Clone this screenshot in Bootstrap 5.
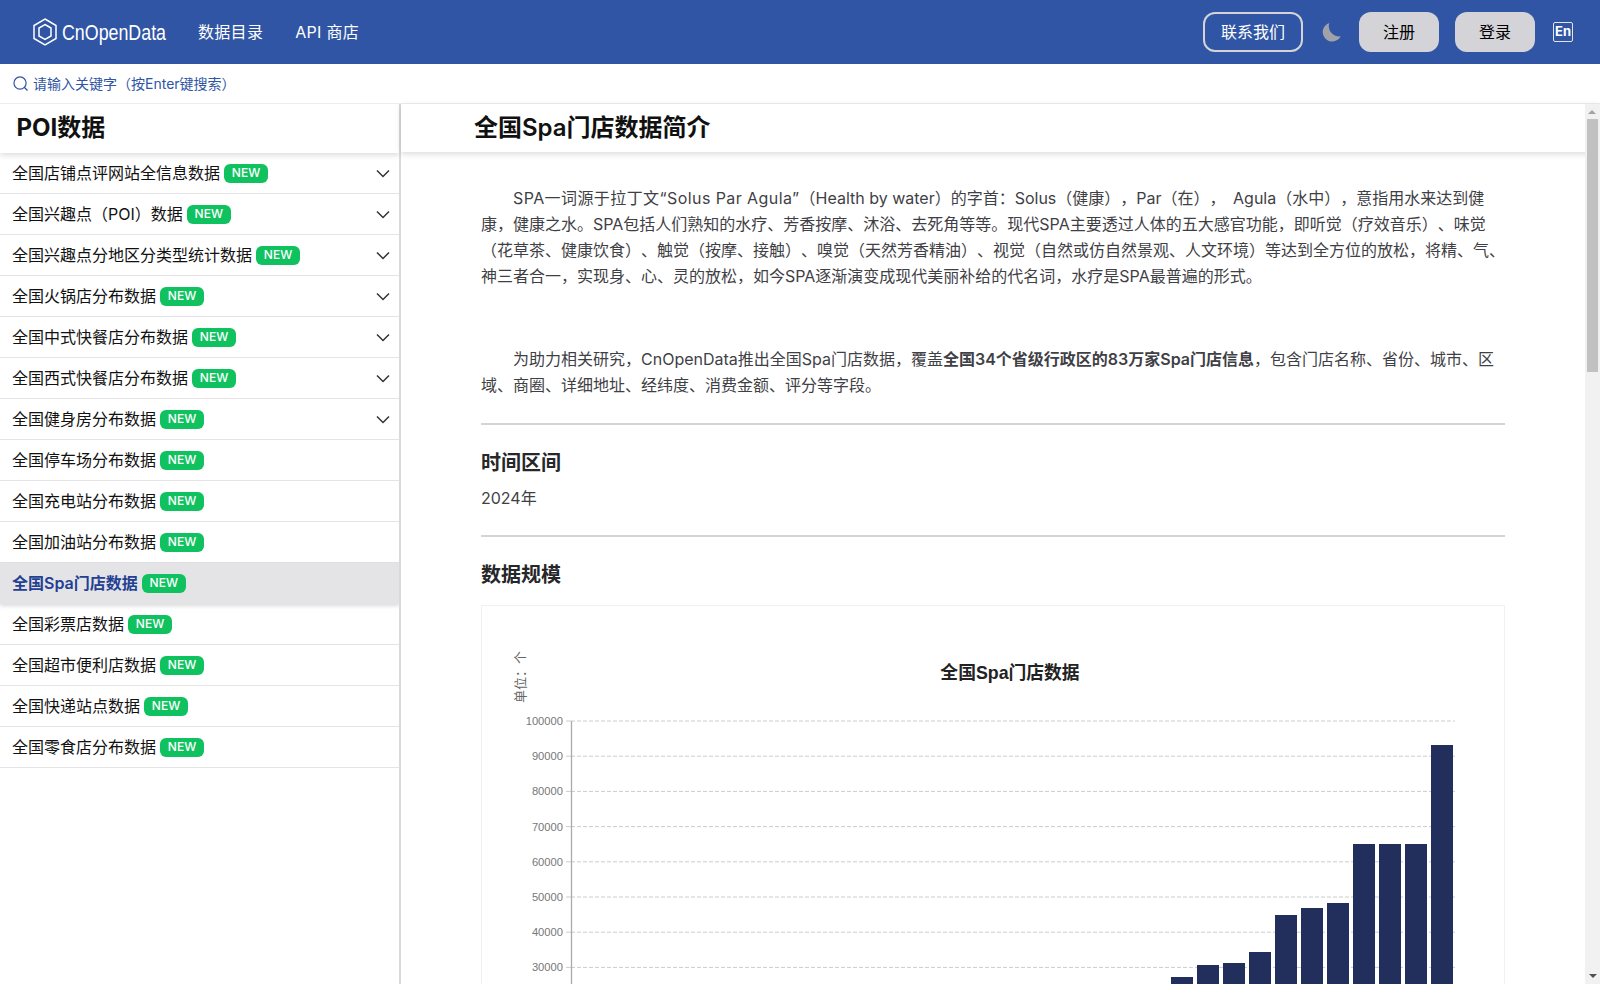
<!DOCTYPE html>
<html lang="zh">
<head>
    <meta charset="UTF-8">
    <meta name="viewport" content="width=device-width, initial-scale=1.0">
    <title>全国Spa门店数据 - CnOpenData</title>
    <link href="https://cdn.jsdelivr.net/npm/bootstrap@5.3.0/dist/css/bootstrap.min.css" rel="stylesheet">
    <style>
        html, body { height: 100%; overflow: hidden; }
        body {
            background: #fff;
            color: #111;
            font-family: Inter, "Noto Sans CJK SC", sans-serif;
            font-size: 16px;
            text-spacing-trim: space-all;
        }
        .page-wrap { height: 984px; display: flex; flex-direction: column; overflow: hidden; }

        .top-bar { background: #2f55a4; height: 64px; flex: none; padding: 0 27px 0 33px; }
        .brand-box { color: #fff; font-family: "Liberation Sans", sans-serif; font-size: 22px; text-decoration: none; width: 133px; gap: 5px; }
        .brand-text { display: inline-block; transform: scaleX(.81); transform-origin: left center; }
        .top-link { color: #fff; text-decoration: none; font-size: 16px; margin-left: 32px; letter-spacing: .3px; }
        .btn-contact { width: 100px; height: 40px; color: #fff; border: 2px solid #d4d4d8; border-radius: 12px; font-size: 16px; padding: 0; }
        .btn-contact:hover { color: #fff; }
        .moon-mark { margin: 0 18px 0 19px; }
        .btn-grey { width: 80px; height: 40px; background: #d4d4d8; color: #000; border: 0; border-radius: 12px; font-size: 16px; padding: 0; }
        .en-mark { width: 20px; height: 20px; margin-left: 18px; border: 1.5px solid #e4e4e7; border-radius: 2px; color: #fff; font-size: 13px; font-weight: 700; }

        .search-row { height: 40px; flex: none; padding-left: 13px; gap: 5px; color: #2f55a4; font-size: 14px; border-bottom: 1px solid #eee; }

        .main-row { flex: 1; min-height: 0; display: flex; }
        .side-pane { width: 401px; flex: none; border-right: 2px solid #d9d9d9; overflow: hidden; }
        .side-head { height: 49px; padding: 0 0 1px 16.5px; font-size: 24px; font-weight: 700; box-shadow: 0 2px 6px rgba(0,0,0,.15); position: relative; }
        .side-item { height: 41px; padding: 0 9px 0 12px; font-size: 16px; color: #111; border-bottom: 1px solid #e4e4e7; }
        .side-item.current { background: #e4e4e7; color: #234092; font-weight: 600; box-shadow: 0 2px 4px rgba(0,0,0,.15); position: relative; }
        .new-tag { background: #10c25f; color: #fff; font-size: 12px; font-weight: 500; border-radius: 6px; height: 19px; width: 44px; margin-left: 4px; }

        .content-pane { flex: 1; min-width: 0; display: flex; flex-direction: column; position: relative; }
        .content-head { height: 48px; flex: none; padding-left: 73px; font-size: 24px; font-weight: 600; box-shadow: 0 2px 6px rgba(0,0,0,.15); position: relative; z-index: 1; }
        .content-body { padding: 33px 95px 0 80px; overflow: hidden; flex: 1; }
        .intro-text { font-size: 16px; line-height: 26px; color: #3f3f46; text-indent: 2em; margin-bottom: 0; }
        .intro-text strong { font-weight: 600; }
        .intro-last { padding-bottom: 1px; }
        .wide-run { letter-spacing: .42px; }
        .wide-gap { word-spacing: 3px; }
        .blank-line { height: 57px; }
        .rule-line { border: 0; border-top: 2px solid #d4d4d8; opacity: 1; margin: 24px 0; }
        .sec-title { font-size: 20px; font-weight: 600; color: #27272a; margin: 0 0 9px; line-height: 28px; }
        .sec-value { font-size: 16px; color: #3f3f46; line-height: 25px; margin: 0; }
        .chart-box { border: 1px solid #f1f1f3; height: 600px; margin-top: 16px; }

        .scroll-track { position: absolute; top: 0; right: 0; bottom: 0; width: 15px; background: #f1f1f1; z-index: 2; }
        .scroll-thumb { position: absolute; top: 15px; left: 2px; width: 11px; height: 253px; background: #c1c1c1; }
        .scroll-up { position: absolute; top: 6px; left: 3px; border: 4px solid transparent; border-top: 0; border-bottom-color: #a3a3a3; }
        .scroll-down { position: absolute; bottom: 6px; left: 4px; border: 4px solid transparent; border-bottom: 0; border-top-color: #505050; }
    </style>
</head>
<body>
<div class="page-wrap">
    <nav class="top-bar d-flex align-items-center">
        <a class="brand-box d-flex align-items-center" href="#">
            <svg class="flex-shrink-0" width="24" height="28" viewBox="0 0 24 28" fill="none" stroke="#fff" stroke-width="1.5">
                <path d="M12 1 L23 7.5 V20.5 L12 27 L1 20.5 V7.5 Z"/>
                <path d="M12 6.5 L18 10 V18 L12 21.5 L6 18 V10 Z"/>
            </svg>
            <span class="brand-text">CnOpenData</span>
        </a>
        <a class="top-link" href="#">数据目录</a>
        <a class="top-link" href="#">API 商店</a>
        <div class="ms-auto d-flex align-items-center">
            <button class="btn btn-contact" type="button">联系我们</button>
            <svg class="moon-mark" width="19" height="19" viewBox="0 0 19 19" fill="#a1a1aa"><path d="M7.3 0 A9.5 9.5 0 1 0 18.7 13.3 A10.3 10.3 0 0 1 7.3 0 Z"/></svg>
            <button class="btn btn-grey" type="button">注册</button>
            <button class="btn btn-grey ms-3" type="button">登录</button>
            <span class="en-mark d-flex align-items-center justify-content-center">En</span>
        </div>
    </nav>

    <div class="search-row d-flex align-items-center">
        <svg width="15" height="15" viewBox="0 0 16 16" fill="none" stroke="#2f55a4" stroke-width="1.3"><circle cx="7.5" cy="7.5" r="6.5"/><path d="M12 12 L15.5 15.5"/></svg>
        <span>请输入关键字（按Enter键搜索）</span>
    </div>

    <div class="main-row">
        <aside class="side-pane" id="sideList">
            <div class="side-head d-flex align-items-center">POI数据</div>
        </aside>
        <main class="content-pane">
            <div class="content-head d-flex align-items-center">全国Spa门店数据简介</div>
            <div class="content-body">
                <p class="intro-text"><span class="wide-run">SPA一词源于拉丁文“Solus Par Agula”</span>（Health by water）的字首：Solus（健康），Par（在），<span class="wide-gap"> </span>Agula（水中），意指用水来达到健康，健康之水。SPA包括人们熟知的水疗、芳香按摩、沐浴、去死角等等。现代SPA主要透过人体的五大感官功能，即听觉（疗效音乐）、味觉（花草茶、健康饮食）、触觉（按摩、接触）、嗅觉（天然芳香精油）、视觉（自然或仿自然景观、人文环境）等达到全方位的放松，将精、气、神三者合一，实现身、心、灵的放松，如今SPA逐渐演变成现代美丽补给的代名词，水疗是SPA最普遍的形式。</p>
                <div class="blank-line"></div>
                <p class="intro-text intro-last">为助力相关研究，CnOpenData推出全国Spa门店数据，覆盖<strong>全国34个省级行政区的83万家Spa门店信息</strong>，包含门店名称、省份、城市、区域、商圈、详细地址、经纬度、消费金额、评分等字段。</p>
                <hr class="rule-line">
                <h5 class="sec-title">时间区间</h5>
                <p class="sec-value">2024年</p>
                <hr class="rule-line">
                <h5 class="sec-title">数据规模</h5>
                <div class="chart-box">
                    <svg width="1022" height="600" viewBox="482 606 1022 600" font-family="Liberation Sans, Noto Sans CJK SC, sans-serif" id="spaChart">
                        <text x="1010" y="679" text-anchor="middle" font-size="17.8" font-weight="700" fill="#222">全国Spa门店数据</text>
                        <text transform="translate(525 651) rotate(-90)" text-anchor="end" font-size="13" fill="#666">单位：个</text>
                        <g id="gridLines"></g>
                        <line x1="571.5" y1="721" x2="571.5" y2="1200" stroke="#aaa" stroke-width="1.3"/>
                        <g id="barGroup" fill="#222f5d"></g>
                    </svg>
                </div>
            </div>
            <div class="scroll-track">
                <div class="scroll-up"></div>
                <div class="scroll-thumb"></div>
                <div class="scroll-down"></div>
            </div>
        </main>
    </div>
</div>

<script>
    // 左侧列表
    var items = [
        ['全国店铺点评网站全信息数据', true], ['全国兴趣点（POI）数据', true], ['全国兴趣点分地区分类型统计数据', true],
        ['全国火锅店分布数据', true], ['全国中式快餐店分布数据', true], ['全国西式快餐店分布数据', true],
        ['全国健身房分布数据', true], ['全国停车场分布数据', false], ['全国充电站分布数据', false],
        ['全国加油站分布数据', false], ['全国Spa门店数据', false], ['全国彩票店数据', false],
        ['全国超市便利店数据', false], ['全国快递站点数据', false], ['全国零食店分布数据', false]
    ];
    var side = document.getElementById('sideList');
    items.forEach(function (it) {
        var row = document.createElement('div');
        row.className = 'side-item d-flex align-items-center' + (it[0] === '全国Spa门店数据' ? ' current' : '');
        row.innerHTML = '<span>' + it[0] + '</span><span class="new-tag d-flex align-items-center justify-content-center">NEW</span>';
        if (it[1]) {
            row.innerHTML += '<svg class="ms-auto" width="14" height="14" viewBox="0 0 14 14" fill="none" stroke="#333" stroke-width="1.5"><path d="M1 4.5 L7 10.5 L13 4.5"/></svg>';
        }
        side.appendChild(row);
    });

    // 图表
    var NS = 'http://www.w3.org/2000/svg';
    function el(parent, name, attrs, text) {
        var e = document.createElementNS(NS, name);
        for (var k in attrs) e.setAttribute(k, attrs[k]);
        if (text) e.textContent = text;
        parent.appendChild(e);
    }
    var grid = document.getElementById('gridLines');
    for (var i = 0; i < 8; i++) {
        var y = 721 + i * 35.2;
        el(grid, 'line', {x1: 566, y1: y, x2: 571, y2: y, stroke: '#ccc'});
        el(grid, 'line', {x1: 571, y1: y, x2: 1455, y2: y, stroke: '#ccc', 'stroke-dasharray': '4 2'});
        el(grid, 'text', {x: 563, y: y + 4, 'text-anchor': 'end', 'font-size': 11.2, fill: '#777'}, String(100000 - i * 10000));
    }
    var tops = [977, 965, 963, 952, 915, 908, 903, 844, 844, 844, 745];
    var bars = document.getElementById('barGroup');
    tops.forEach(function (t, i) {
        el(bars, 'rect', {x: 1171 + i * 26, y: t, width: 22, height: 1200 - t});
    });
</script>
<script src="https://cdn.jsdelivr.net/npm/bootstrap@5.3.0/dist/js/bootstrap.bundle.min.js"></script>
</body>
</html>
